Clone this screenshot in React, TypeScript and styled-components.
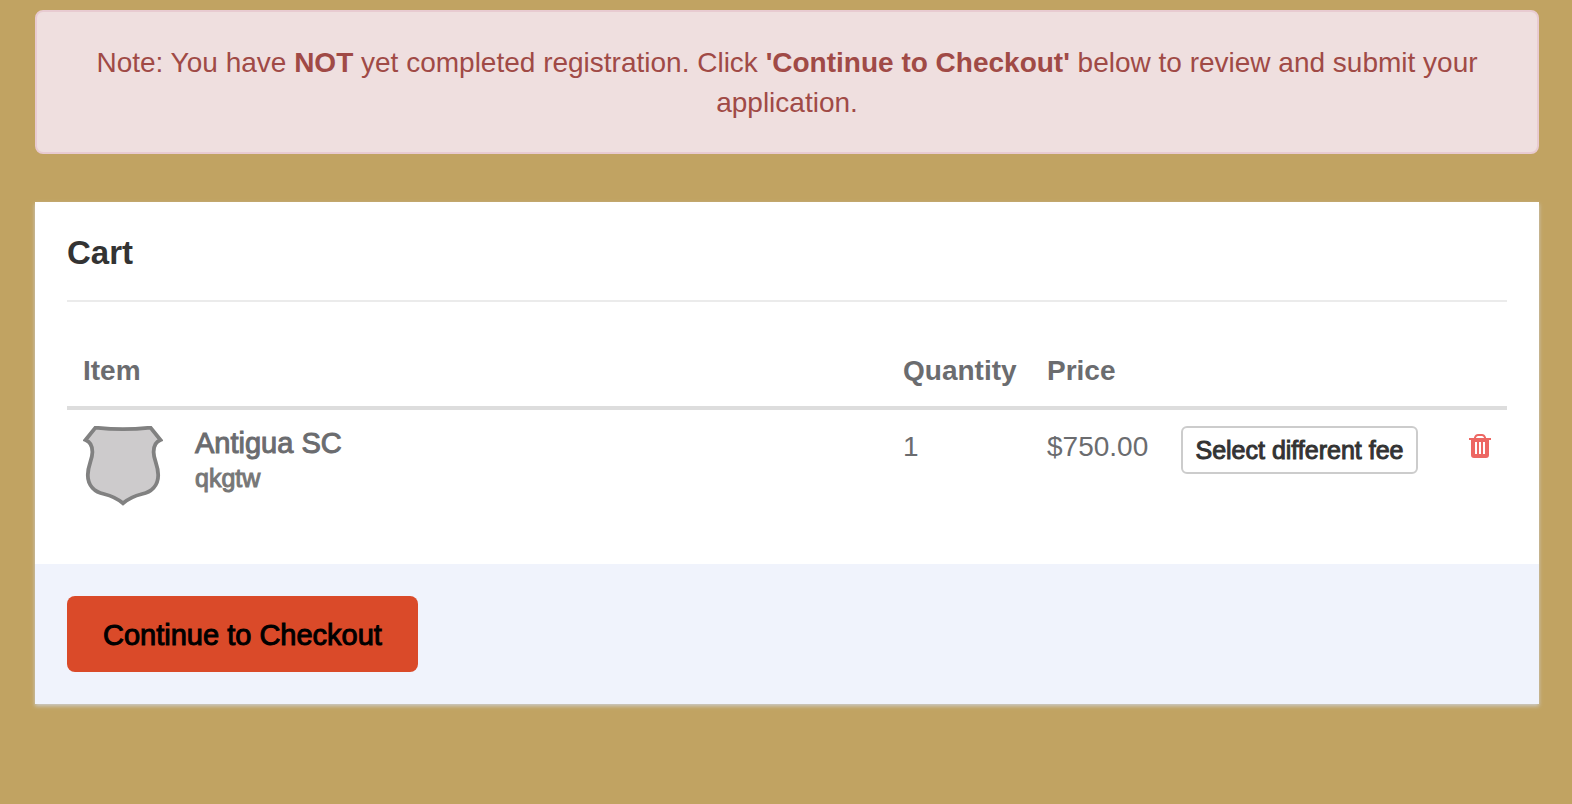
import React from "react";
import styled, { createGlobalStyle, css } from "styled-components";

const GlobalStyle = createGlobalStyle`
  *, *::before, *::after { box-sizing: border-box; }
  body {
    margin: 0;
    background: #c1a362;
    color: #6b6c6f;
    font: 28px/40px "Liberation Sans", Arial, sans-serif;
  }
`;

const medium = css`
  -webkit-text-stroke: 1px currentColor;
`;

const Page = styled.main`
  padding: 10px 33px 40px 35px;
`;

const Alert = styled.p`
  margin: 0 0 48px;
  padding: 31px 32px 29px;
  border: 2px solid #e8cbd1;
  border-radius: 8px;
  background: #efdfdf;
  color: #a04a46;
  text-align: center;
`;

const Card = styled.section`
  background: #fff;
  box-shadow: 0 2px 4px #ccc;
`;

const CardBody = styled.div`
  padding: 32px 32px 42px;
`;

const Title = styled.h1`
  margin: 0 0 32px;
  padding: 1px 0 29px;
  border-bottom: 2px solid #ebebeb;
  color: #333;
  font-size: 33px;
  line-height: 36px;
`;

const CartTable = styled.table`
  width: 100%;
  border-collapse: separate;
  border-spacing: 0;
  table-layout: fixed;
`;

const HeadCell = styled.th<{ $width?: number }>`
  width: ${({ $width }) => ($width ? `${$width}px` : "auto")};
  padding: 17px 16px 15px;
  border-bottom: 4px solid #ddd;
  text-align: left;
`;

const Cell = styled.td<{ $align?: "left" | "right" }>`
  padding: 16px;
  text-align: ${({ $align = "left" }) => $align};
  vertical-align: top;
  white-space: nowrap;
`;

const Value = styled.div`
  padding-top: 1px;
`;

const Item = styled.div`
  display: flex;
  gap: 32px;
`;

const ItemName = styled.div`
  font-size: 29px;
  line-height: 34px;
  ${medium}
`;

const ItemDetail = styled.div`
  color: #777;
  font-size: 25px;
  line-height: 36px;
  ${medium}
`;

const Button = styled.button`
  display: block;
  border: 2px solid transparent;
  border-radius: 8px;
  font-family: inherit;
  cursor: pointer;
  ${medium}
`;

const FeeButton = styled(Button)`
  width: 100%;
  padding: 6px 0;
  border-color: #ccc;
  border-radius: 6px;
  background: #fff;
  color: #333;
  font-size: 25px;
  line-height: 32px;
`;

const CheckoutButton = styled(Button)`
  padding: 17px 34px 15px;
  background: #da4a29;
  color: #000;
  font-size: 29px;
  line-height: 40px;
`;

const IconButton = styled.button`
  display: inline-block;
  padding: 8px 0;
  border: 0;
  background: none;
  color: #ed6763;
  cursor: pointer;

  svg { display: block; }
`;

const CardFooter = styled.footer`
  padding: 32px;
  background: #f0f3fc;
`;

const Shield = () => (
  <svg width="80" height="80" viewBox="0 0 80 80" aria-hidden="true">
    <path
      d="M12.500 1.600Q40 4.600 67.500 1.600L77.500 14C72 16 70.600 20 70.600 26C70.600 34 75.200 39 75.200 49C75.200 60 68 66 59 68C51 70 45 73 40 77.300C35 73 29 70 21 68C12 66 4.800 60 4.800 49C4.800 39 9.400 34 9.400 26C9.400 20 8 16 2.500 14Z"
      fill="#cdcbcc"
      stroke="#818181"
      strokeWidth="3.8"
    />
  </svg>
);

const Trash = () => (
  <svg width="22" height="24" viewBox="0 0 22 24" aria-hidden="true">
    <path d="M6 5V3.500Q7 1 9 1H13Q15 1 16 3.500V5" fill="none" stroke="currentColor" strokeWidth="2" />
    <path
      d="M0 4H22V6H20V21Q20 24 17 24H5Q2 24 2 21V6H0ZM6 8V20H8V8ZM10 8V20H12V8ZM14 8V20H16V8Z"
      fill="currentColor"
      fillRule="evenodd"
    />
  </svg>
);

export default function App() {
  return (
    <>
      <GlobalStyle />
      <Page>
        <Alert role="alert">
          Note: You have <strong>NOT</strong> yet completed registration. Click{" "}
          <strong>'Continue to Checkout'</strong> below to review and submit your application.
        </Alert>
        <Card>
          <CardBody>
            <Title>Cart</Title>
            <CartTable>
              <thead>
                <tr>
                  <HeadCell scope="col">Item</HeadCell>
                  <HeadCell scope="col" $width={144}>Quantity</HeadCell>
                  <HeadCell scope="col" $width={134}>Price</HeadCell>
                  <HeadCell $width={269} />
                  <HeadCell $width={73} />
                </tr>
              </thead>
              <tbody>
                <tr>
                  <Cell>
                    <Item>
                      <Shield />
                      <div>
                        <ItemName>Antigua SC</ItemName>
                        <ItemDetail>qkgtw</ItemDetail>
                      </div>
                    </Item>
                  </Cell>
                  <Cell>
                    <Value>1</Value>
                  </Cell>
                  <Cell>
                    <Value>$750.00</Value>
                  </Cell>
                  <Cell>
                    <FeeButton type="button">Select different fee</FeeButton>
                  </Cell>
                  <Cell $align="right">
                    <IconButton type="button" aria-label="Remove item">
                      <Trash />
                    </IconButton>
                  </Cell>
                </tr>
              </tbody>
            </CartTable>
          </CardBody>
          <CardFooter>
            <CheckoutButton type="button">Continue to Checkout</CheckoutButton>
          </CardFooter>
        </Card>
      </Page>
    </>
  );
}
